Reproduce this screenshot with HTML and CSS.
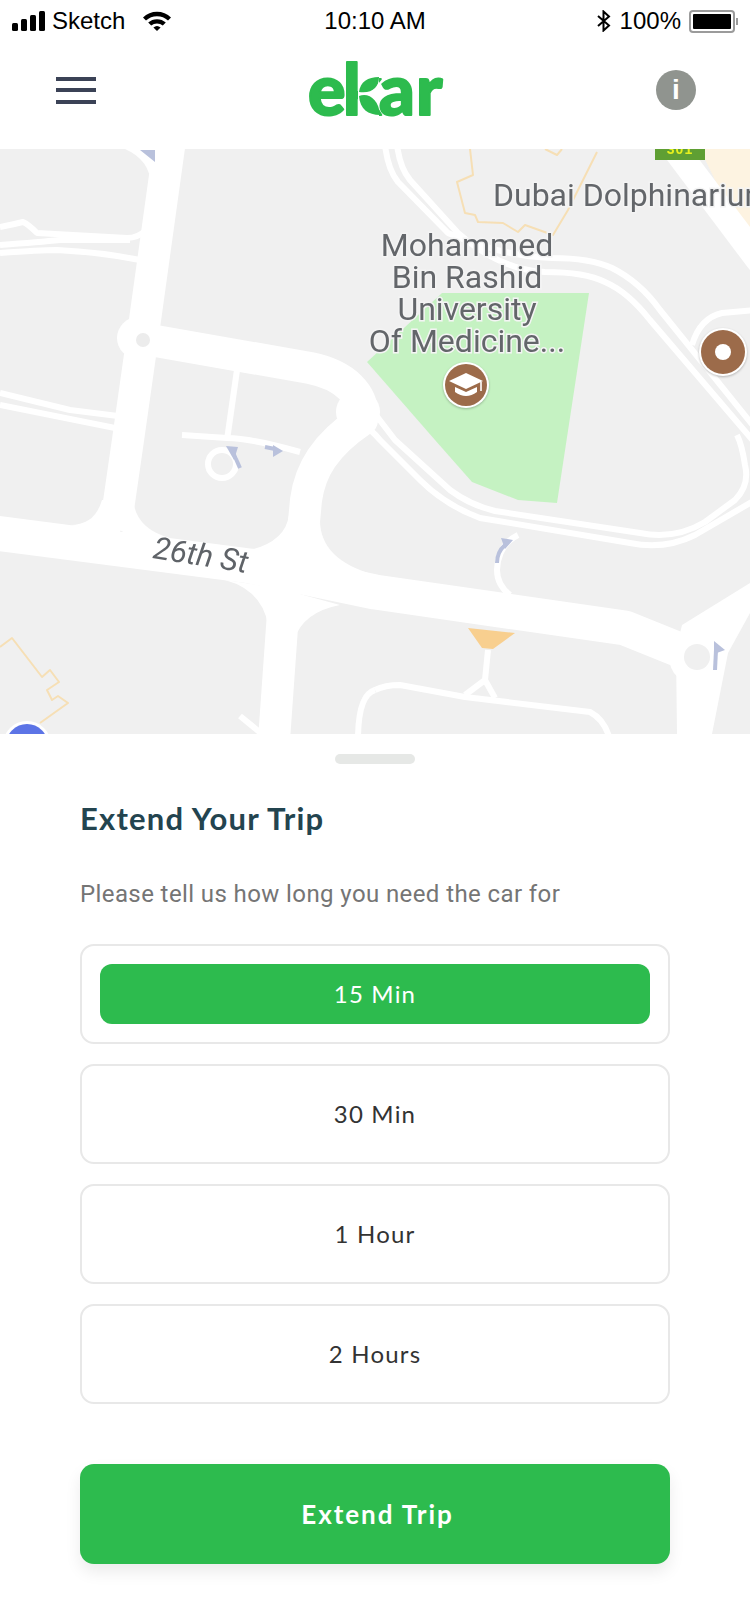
FILE: index.html
```html
<!DOCTYPE html>
<html lang="en">
<head>
  <meta charset="UTF-8">
  <title>Extend Your Trip - ekar</title>
  <link rel="stylesheet" href="styles.css">
</head>
<body>
  <div class="phone">
    <div class="status-bar">
      <div class="status-left">
        <svg class="signal" width="33" height="20" viewBox="0 0 33 20">
          <rect x="0" y="12" width="6" height="8" rx="1.5"/>
          <rect x="9" y="8" width="6" height="12" rx="1.5"/>
          <rect x="18" y="4" width="6" height="16" rx="1.5"/>
          <rect x="27" y="0" width="6" height="20" rx="1.5"/>
        </svg>
        <span class="carrier">Sketch</span>
        <svg class="wifi" width="28" height="20" viewBox="0 0 28 20">
          <path d="M0 6.5 A20 20 0 0 1 28 6.5 L25 9.6 A16 16 0 0 0 3 9.6 Z"/>
          <path d="M5.2 11.6 A13 13 0 0 1 22.8 11.6 L19.8 14.6 A9 9 0 0 0 8.2 14.6 Z"/>
          <path d="M10.4 16.6 A5.5 5.5 0 0 1 17.6 16.6 L14 20 Z"/>
        </svg>
      </div>
      <div class="status-time">10:10 AM</div>
      <div class="status-right">
        <svg class="bluetooth" width="14" height="22" viewBox="0 0 14 22">
          <path d="M1 6 L12 15.5 L6.5 20.5 V1.5 L12 6.5 L1 16" fill="none" stroke="#000" stroke-width="2"/>
        </svg>
        <span class="battery-pct">100%</span>
        <div class="battery"><div class="battery-fill"></div></div>
      </div>
    </div>

    <header class="top-bar">
      <button class="menu-btn" aria-label="Menu">
        <span></span><span></span><span></span>
      </button>
      <svg class="logo" width="136" height="62" viewBox="0 0 136 62">
        <text class="logo-text" x="0 35 71 108" y="56">ekar</text>
        <rect x="50" y="10" width="21" height="50" fill="#fff"/>
        <path class="logo-leaf" d="M51 33 C52 23 60 18 71 18 C71 28 64 35 51 33 Z"/>
        <path class="logo-leaf" d="M51 37 C60 33 71 40 72 56 C60 56 52 50 51 37 Z"/>
      </svg>
      <div class="info-btn">i</div>
    </header>

    <svg class="map" width="750" height="585" viewBox="0 149 750 585">
      <rect x="0" y="149" width="750" height="585" fill="#f0f0f0"/>
      <polygon class="sand" points="700,149 750,149 750,240 728,207"/>
      <polygon class="park" points="442,293 589,293 557,503 518,500 472,482 435,440 367,362"/>

      <!-- main roads -->
      <path class="road" d="M170 140 L145 320 L128 440 L115 530"/>
      <path class="road" d="M150 340 L310 368 C345 375 365 395 362 420 C325 445 310 470 306 500 L300 565"/>
      <circle class="circle-road" cx="358" cy="412" r="22"/>
      <path class="road wide" d="M-5 533 L250 566 L375 592 L625 628 L697 657"/>
      <path class="road" d="M285 585 L274 740"/>
      <path class="fill-road" d="M125 149 Q150 160 151 185 L146 232 L160 232 L165 149 Z"/>
      <path class="road top-right" d="M672 145 L760 262"/>
      <polygon class="fill-road" points="682,625 750,583 750,613 728,653 712,734 677,734 676,650"/>
      <path class="fill-road" d="M70 525 Q95 525 102 500 L120 500 L120 535 Z"/>
      <path class="fill-road" d="M133 495 Q133 528 170 538 L120 540 Z"/>
      <path class="fill-road" d="M289 515 Q285 545 240 552 L300 560 Z"/>
      <path class="fill-road" d="M320 520 Q320 560 375 575 L305 570 Z"/>
      <path class="fill-road" d="M225 580 Q262 590 268 625 L290 590 Z"/>
      <path class="fill-road" d="M294 640 Q303 612 340 605 L285 590 Z"/>
      <circle class="circle-road" cx="138" cy="338" r="21"/>
      <circle cx="143" cy="340" r="7" fill="#ececec"/>
      <circle class="circle-road" cx="697" cy="657" r="28"/>
      <circle cx="697" cy="657" r="13" fill="#f0f0f0"/>

      <!-- small roads -->
      <path class="lane" d="M0 227 Q15 224 23 222 Q28 224 37 233 L127 238 Q138 238 146 230"/>
      <path class="lane" d="M0 245 Q40 242 60 240 L130 240"/>
      <path class="lane" d="M0 253 Q40 250 57 250 Q100 252 140 260"/>
      <path class="lane" d="M0 393 L70 410 L118 416"/>
      <path class="lane" d="M0 405 L115 428"/>
      <path class="lane" d="M385 145 Q388 170 398 182 L448 233 Q500 256 552 258 Q590 258 612 268 Q640 282 660 310 L755 428"/>
      <path class="lane" d="M397 145 Q400 168 410 180 L458 233 Q500 270 545 272 Q585 272 605 282 Q628 292 650 320 L755 443"/>
      <path class="lane" d="M372 410 L395 440 L450 490 Q470 505 495 511 L640 533 Q675 540 705 522 L735 500 Q750 485 745 465 Q742 445 737 435"/>
      <path class="lane" d="M362 425 Q372 430 380 440 L420 480 Q445 505 480 518 L630 543 Q665 550 695 535 L755 500"/>
      <path class="lane" d="M692 345 Q700 318 722 313 L755 310"/>
      <path class="lane" d="M237 370 L227 440"/>
      <path class="lane" d="M182 435 L227 438 Q250 438 300 452"/>
      <circle cx="222" cy="464" r="14" fill="none" stroke="#fff" stroke-width="6"/>
      <path class="lane" d="M518 535 Q498 545 497 570 Q497 585 510 595"/>
      <path class="lane" d="M375 690 Q385 685 400 685 L465 697 L590 712 Q605 720 610 740"/>
      <path class="lane" d="M375 690 Q358 695 358 740"/>
      <path class="lane" d="M488 650 L485 680 L465 695 M485 680 L495 698"/>
      <path class="lane" d="M240 716 L262 734"/>

      <!-- outlines and marks -->
      <polyline class="outline" points="470,149 473,175 457,182 465,213 475,215 478,222 503,223 518,232 525,225 553,235 568,210 597,152"/>
      <polyline class="outline" points="545,149 557,155 562,149"/>
      <polyline class="outline" points="0,647 12,638 42,677 50,670 59,682 47,690 52,700 58,696 68,703 40,723"/>
      <polygon fill="#f8cf8f" points="468,628 515,633 493,649 482,648"/>
      <polygon class="arrow" points="140,150 155,150 155,162"/>
      <path class="arrow-line" d="M232 450 L240 468"/>
      <polygon class="arrow" points="226,446 238,447 234,460"/>
      <path class="arrow-line" d="M265 447 L275 449"/>
      <polygon class="arrow" points="273,445 283,451 273,457"/>
      <path class="arrow-line" d="M505 545 Q497 552 497 563"/>
      <polygon class="arrow" points="501,538 513,540 505,549"/>
      <path class="arrow-line" d="M716 650 L715 670"/>
      <polygon class="arrow" points="714,641 725,650 714,654"/>

      <rect x="655" y="149" width="50" height="11" fill="#5f9f33"/>
      <text class="shield-text" x="680" y="154">301</text>

      <!-- labels -->
      <text class="label" x="493" y="206">Dubai Dolphinarium</text>
      <text class="label center" x="467" y="256">Mohammed</text>
      <text class="label center" x="467" y="288">Bin Rashid</text>
      <text class="label center" x="467" y="320">University</text>
      <text class="label center" x="467" y="352">Of Medicine...</text>
      <text class="street" transform="translate(152 558) rotate(9)">26th St</text>

      <!-- pins -->
      <circle cx="466" cy="385" r="23" fill="#fff" class="pin-ring"/>
      <circle cx="466" cy="385" r="21" fill="#9c6b4a"/>
      <path d="M466 373 L483 381 L466 389 L449 381 Z" fill="#fff"/>
      <path d="M455 387 L466 392 L477 387 V392 Q466 400 455 392 Z" fill="#fff"/>
      <path d="M481 382 V391" stroke="#fff" stroke-width="1.6"/>
      <circle cx="723" cy="352" r="24" fill="#fff" class="pin-ring"/>
      <circle cx="723" cy="352" r="22" fill="#9c6b4a"/>
      <circle cx="723" cy="352" r="8" fill="#fff"/>
      <circle cx="27" cy="745" r="24" fill="#fff"/>
      <circle cx="27" cy="745" r="21" fill="#5c74e6"/>
    </svg>

    <section class="sheet">
      <div class="handle"></div>
      <h2 class="title">Extend Your Trip</h2>
      <p class="subtitle">Please tell us how long you need the car for</p>

      <div class="options">
        <div class="option selected"><span>15 Min</span></div>
        <div class="option"><span>30 Min</span></div>
        <div class="option"><span>1 Hour</span></div>
        <div class="option"><span>2 Hours</span></div>
      </div>

      <button class="extend-btn">Extend Trip</button>
    </section>
  </div>
</body>
</html>
```

FILE: styles.css
```css
* {
  box-sizing: border-box;
}

body {
  margin: 0;
  background: #fff;
  font-family: "Liberation Sans", Arial, sans-serif;
}

.phone {
  width: 750px;
  height: 1624px;
  overflow: hidden;
}

/* status bar */
.status-bar {
  height: 42px;
  padding: 0 15px 0 12px;
  display: grid;
  grid-template-columns: 1fr auto 1fr;
  align-items: center;
  font-size: 24px;
  color: #000;
}

.status-left,
.status-right {
  display: flex;
  align-items: center;
}

.status-right {
  justify-content: flex-end;
}

.status-time {
  margin-left: 3px;
}

.carrier {
  margin-left: 7px;
}

.wifi {
  margin-left: 18px;
}

.battery-pct {
  margin-left: 9px;
}

.battery {
  width: 46px;
  height: 23px;
  margin-left: 8px;
  border: 2px solid #9b9b9b;
  border-radius: 4px;
  padding: 2px;
  position: relative;
}

.battery::after {
  content: "";
  position: absolute;
  right: -5px;
  top: 6px;
  width: 2px;
  height: 7px;
  background: #9b9b9b;
}

.battery-fill {
  height: 100%;
  background: #000;
  border-radius: 1px;
}

/* top bar */
.top-bar {
  height: 107px;
  padding: 0 54px 11px 56px;
  display: flex;
  align-items: center;
  justify-content: space-between;
}

.menu-btn {
  width: 40px;
  height: 27px;
  padding: 0;
  border: 0;
  background: none;
  display: flex;
  flex-direction: column;
  justify-content: space-between;
}

.menu-btn span {
  display: block;
  height: 4px;
  background: #3b4256;
}

.logo-text {
  font-family: Lato, sans-serif;
  font-weight: 900;
  font-size: 70px;
  fill: #2dbb4e;
  stroke: #2dbb4e;
  stroke-width: 2px;
  stroke-linejoin: round;
}

.logo-leaf {
  fill: #2dbb4e;
}

.info-btn {
  width: 40px;
  height: 40px;
  border-radius: 50%;
  background: #90948f;
  color: #fff;
  font-family: "Liberation Sans", sans-serif;
  font-weight: 700;
  font-size: 28px;
  line-height: 40px;
  text-align: center;
}

/* map */
.map {
  display: block;
  filter: blur(0.5px);
}

.sand {
  fill: #fdf3e1;
}

.park {
  fill: #c5f2c2;
}

.road,
.lane,
.outline,
.arrow-line {
  fill: none;
  stroke-linejoin: round;
}

.road {
  stroke: #fff;
  stroke-width: 32px;
}

.road.wide {
  stroke-width: 35px;
}

.road.top-right {
  stroke-width: 26px;
}

.circle-road,
.fill-road {
  fill: #fff;
}

.lane {
  stroke: #fff;
  stroke-width: 6px;
}

.outline {
  stroke: #f6dfb5;
  stroke-width: 2px;
}

.arrow {
  fill: #b9c1dc;
}

.arrow-line {
  stroke: #b9c1dc;
  stroke-width: 4px;
}

.shield-text {
  font-family: "Liberation Sans", sans-serif;
  font-weight: 700;
  font-size: 14px;
  letter-spacing: 1px;
  text-anchor: middle;
  fill: #e6f01e;
}

.label {
  font-family: Roboto, sans-serif;
  font-size: 32px;
  fill: #63666a;
  stroke: #f4f4f4;
  stroke-width: 3px;
  paint-order: stroke;
}

.label.center {
  text-anchor: middle;
}

.street {
  font-family: Roboto, sans-serif;
  font-style: italic;
  font-size: 31px;
  fill: #5f6368;
}

.pin-ring {
  filter: drop-shadow(0 1px 1px rgba(0, 0, 0, 0.25));
}

/* bottom sheet */
.sheet {
  padding: 20px 80px 0;
  background: #fff;
}

.handle {
  width: 80px;
  height: 10px;
  margin: 0 auto;
  background: #e6e8e6;
  border-radius: 5px;
}

.title {
  margin: 36px 0 0;
  font-family: Lato, sans-serif;
  font-weight: 700;
  font-size: 31px;
  line-height: 36px;
  letter-spacing: 1.2px;
  color: #23444f;
}

.subtitle {
  margin: 42px 0 0;
  font-family: Roboto, sans-serif;
  font-size: 24px;
  line-height: 32px;
  letter-spacing: 0.4px;
  color: #757575;
}

.options {
  margin-top: 34px;
  display: flex;
  flex-direction: column;
  gap: 20px;
}

.option {
  height: 100px;
  padding: 18px;
  border: 2px solid #e8e8e8;
  border-radius: 14px;
  display: flex;
  font-family: Lato, sans-serif;
  font-size: 24px;
  letter-spacing: 1.2px;
  color: #333;
}

.option span {
  flex: 1;
  display: flex;
  align-items: center;
  justify-content: center;
  padding-bottom: 2px;
  border-radius: 12px;
}

.option.selected span {
  background: #2dbb4e;
  color: #fff;
}

.extend-btn {
  display: block;
  width: 100%;
  height: 100px;
  margin-top: 60px;
  padding: 0 0 0 5px;
  border: 0;
  border-radius: 14px;
  background: #2dbb4e;
  box-shadow: 0 8px 16px rgba(0, 0, 0, 0.08);
  font-family: Lato, sans-serif;
  font-weight: 700;
  font-size: 26px;
  letter-spacing: 1.95px;
  color: #fff;
}
```
